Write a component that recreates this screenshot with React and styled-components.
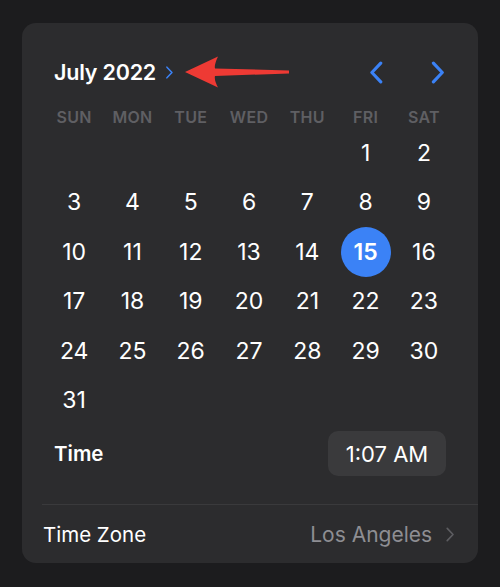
import React from "react";
import styled, { createGlobalStyle } from "styled-components";

const GlobalStyle = createGlobalStyle`
  html, body {
    margin: 0;
    padding: 0;
    background: #1c1c1e;
    font-family: Inter, "Liberation Sans", sans-serif;
    -webkit-font-smoothing: antialiased;
  }
`;

const Page = styled.div`
  width: 500px;
  height: 587px;
  padding: 23px 22px 0;
  box-sizing: border-box;
  background: #1c1c1e;
`;

const Card = styled.div`
  width: 456px;
  background: #2c2c2e;
  border-radius: 14px;
  padding-top: 34px;
  box-sizing: border-box;
`;

const Header = styled.div`
  display: flex;
  align-items: center;
  height: 30px;
  padding: 0 33px 0 32px;
`;

const Month = styled.div`
  color: #fff;
  font-size: 21.5px;
  font-weight: 600;
  letter-spacing: -0.2px;
`;

const Nav = styled.div`
  margin-left: auto;
  display: flex;
  gap: 46px;
  align-items: center;
`;

const WeekRow = styled.div`
  display: grid;
  grid-template-columns: repeat(7, 58.3px);
  padding-left: 23px;
  margin-top: 20px;
  height: 20px;
  align-items: center;
`;

const WeekDay = styled.div`
  text-align: center;
  color: #5f5f63;
  font-size: 16px;
  font-weight: 600;
  letter-spacing: 0.3px;
`;

const DayGrid = styled.div`
  display: grid;
  grid-template-columns: repeat(7, 58.3px);
  grid-auto-rows: 49.5px;
  padding-left: 23px;
  margin-top: 1px;
`;

const Day = styled.div`
  display: flex;
  align-items: center;
  justify-content: center;
`;

const DayNum = styled.span`
  display: flex;
  align-items: center;
  justify-content: center;
  width: 50px;
  height: 50px;
  border-radius: 50%;
  font-size: 23px;
  font-weight: ${(p) => (p.$selected ? 600 : 400)};
  color: #fff;
  background: ${(p) => (p.$selected ? "#3b82f6" : "transparent")};
`;

const TimeRow = styled.div`
  display: flex;
  align-items: center;
  justify-content: space-between;
  padding: 0 32px;
  margin-top: 6px;
`;

const Label = styled.div`
  color: #fff;
  font-size: 20.5px;
  font-weight: ${(p) => (p.$bold ? 600 : 400)};
`;

const TimePill = styled.div`
  width: 118px;
  height: 45px;
  border-radius: 10px;
  background: #3a3a3c;
  color: #fff;
  font-size: 22px;
  display: flex;
  align-items: center;
  justify-content: center;
`;

const Separator = styled.div`
  height: 1px;
  background: #3a3a3c;
  margin: 28px 0 0 20px;
`;

const ZoneRow = styled.div`
  display: flex;
  align-items: center;
  height: 58px;
  padding: 0 23px 0 21px;
`;

const ZoneValue = styled.div`
  margin-left: auto;
  display: flex;
  align-items: center;
  gap: 13px;
  color: #8e8e93;
  font-size: 21px;
`;

const Chevron = ({ dir = "right", size = 22, color = "#3b82f6", width = 3 }) => (
  <svg width={size * 0.66} height={size} viewBox="0 0 14 22">
    <path
      d={dir === "right" ? "M3 2 L11.5 11 L3 20" : "M11 2 L2.5 11 L11 20"}
      fill="none"
      stroke={color}
      strokeWidth={width}
      strokeLinecap="round"
      strokeLinejoin="round"
    />
  </svg>
);

const Arrow = () => (
  <svg width="108" height="34" viewBox="0 0 108 34" style={{ marginLeft: 9 }}>
    <path
      d="M2 17 L35 1.5 Q31 10 32 13.5 L106 15.5 L106 18.5 L32 21 Q31 25 35 32.5 Z"
      fill="#ee3a34"
    />
  </svg>
);

const weekDays = ["SUN", "MON", "TUE", "WED", "THU", "FRI", "SAT"];

export default function App() {
  const cells = [];
  for (let i = 0; i < 5; i++) cells.push(null);
  for (let d = 1; d <= 31; d++) cells.push(d);

  return (
    <Page>
      <GlobalStyle />
      <Card>
        <Header>
          <Month>July 2022</Month>
          <span style={{ marginLeft: 9, display: "flex" }}>
            <Chevron size={13} width={2.6} />
          </span>
          <Arrow />
          <Nav>
            <Chevron dir="left" size={23} />
            <Chevron dir="right" size={23} />
          </Nav>
        </Header>
        <WeekRow>
          {weekDays.map((w) => (
            <WeekDay key={w}>{w}</WeekDay>
          ))}
        </WeekRow>
        <DayGrid>
          {cells.map((d, i) => (
            <Day key={i}>
              {d && <DayNum $selected={d === 15}>{d}</DayNum>}
            </Day>
          ))}
        </DayGrid>
        <TimeRow>
          <Label $bold>Time</Label>
          <TimePill>1:07 AM</TimePill>
        </TimeRow>
        <Separator />
        <ZoneRow>
          <Label>Time Zone</Label>
          <ZoneValue>
            Los Angeles
            <Chevron size={15} color="#5d5d61" width={2.4} />
          </ZoneValue>
        </ZoneRow>
      </Card>
    </Page>
  );
}
